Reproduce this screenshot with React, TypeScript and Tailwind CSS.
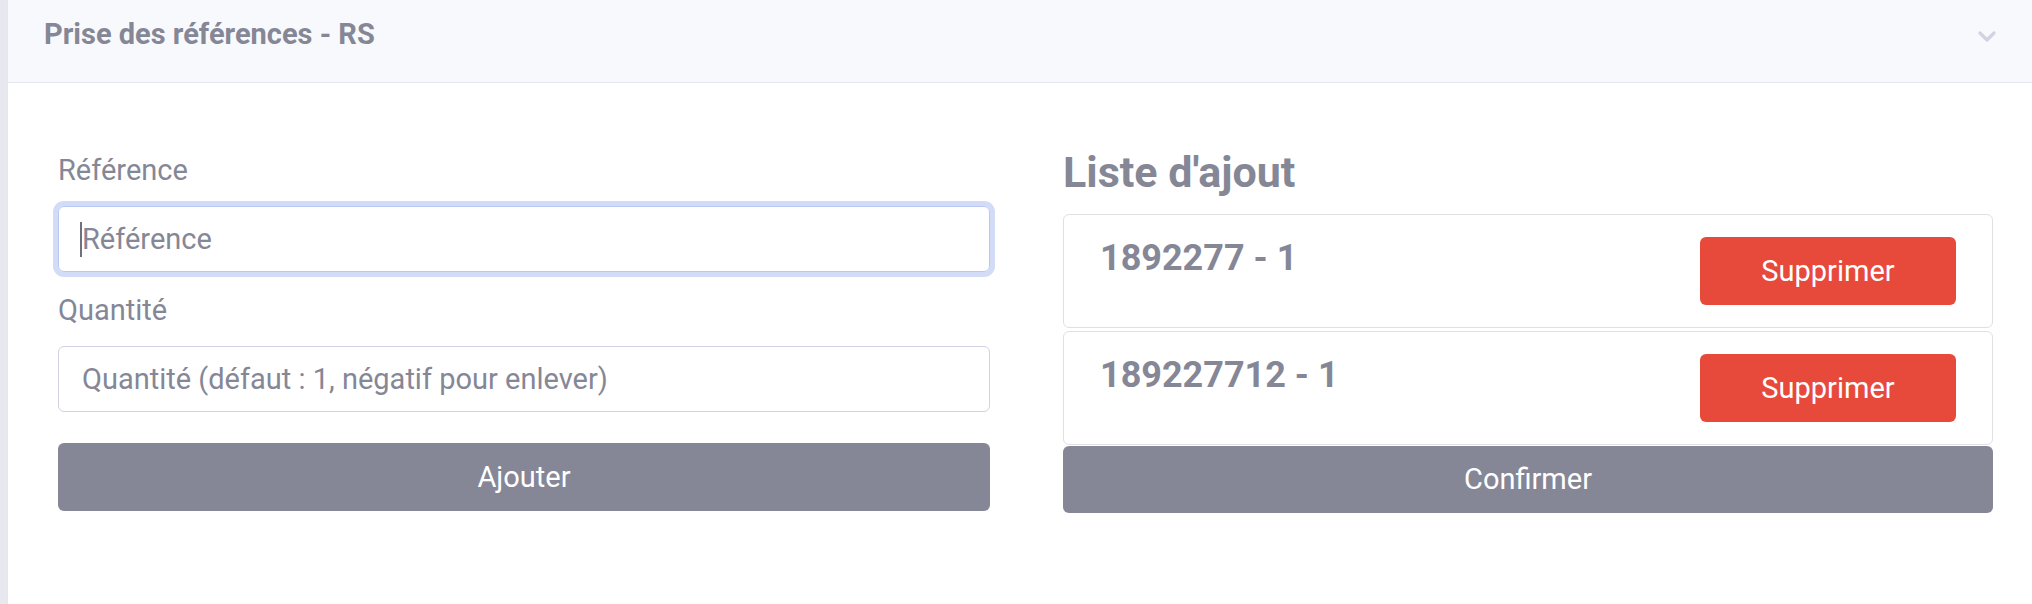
import { useState } from "react"

type Entry = {
  ref: string
  qty: number
}

const initialEntries: Entry[] = [
  { ref: "1892277", qty: 1 },
  { ref: "189227712", qty: 1 },
]

const ChevronDown = () => (
  <svg width="18" height="12" viewBox="0 0 18 12" fill="none" className="mt-[6px]">
    <polyline
      points="2,2 9,9 16,2"
      stroke="#d1d3e2"
      strokeWidth="3.2"
      strokeLinecap="round"
      strokeLinejoin="round"
    />
  </svg>
)

const EntryRow: React.FC<{ entry: Entry; onRemove: () => void }> = ({
  entry,
  onRemove,
}) => {
  return (
    <div className="h-[114px] flex items-start justify-between border border-[#e0e0e0] rounded-[6px] bg-white pt-[22px] pl-[36px] pr-[36px]">
      <div className="text-[36px] leading-[43px] font-bold text-[#858796]">
        {entry.ref} - {entry.qty}
      </div>
      <button
        onClick={onRemove}
        className="w-[256px] h-[68px] rounded-[6px] bg-[#e74a3b] text-white text-[29px] leading-none"
      >
        Supprimer
      </button>
    </div>
  )
}

export default function App() {
  const [entries, setEntries] = useState<Entry[]>(initialEntries)

  return (
    <div className="flex w-[2032px] h-[604px] overflow-hidden bg-white font-['Roboto',sans-serif] text-[#858796]">
      <div className="w-[7px] shrink-0 bg-[#e8e9f0]"></div>
      <div className="flex-1 flex flex-col border-l border-[#e3e6f0]">
        <div className="h-[83px] shrink-0 flex items-center justify-between bg-[#f8f9fc] border-b border-[#e3e6f0] pl-[36px] pr-[36px] pb-[14px]">
          <div className="text-[29px] leading-[35px] font-bold text-[#858796]">
            Prise des références - RS
          </div>
          <ChevronDown />
        </div>

        <div className="grid grid-cols-[932px_930px] gap-x-[73px] items-start pl-[50px] pt-[62px]">
          <div className="flex flex-col mt-[4px]">
            <label className="text-[29px] leading-[43px] mb-[14px]">
              Référence
            </label>
            <div className="relative">
              <input
                readOnly
                placeholder="Référence"
                className="w-full h-[66px] px-[23px] text-[29px] rounded-[6px] border border-[#bac8f3] ring-[5px] ring-[#4e73df]/25 outline-none placeholder:text-[#858796]"
              />
              <span className="absolute left-[22px] top-[16px] w-[2px] h-[35px] bg-[#6e7080]"></span>
            </div>
            <label className="text-[29px] leading-[43px] mt-[17px] mb-[14px]">
              Quantité
            </label>
            <input
              readOnly
              placeholder="Quantité (défaut : 1, négatif pour enlever)"
              className="w-full h-[66px] px-[23px] text-[29px] rounded-[6px] border border-[#d1d3e2] outline-none placeholder:text-[#858796]"
            />
            <button className="mt-[31px] h-[68px] w-full rounded-[6px] bg-[#858796] text-white text-[29px] leading-none">
              Ajouter
            </button>
          </div>

          <div className="flex flex-col mt-[1px]">
            <h3 className="text-[43px] leading-[52px] font-bold mb-[16px]">
              Liste d'ajout
            </h3>
            <div className="flex flex-col gap-[3px]">
              {entries.map((entry, i) => (
                <EntryRow
                  key={`${entry.ref}${i}`}
                  entry={entry}
                  onRemove={() =>
                    setEntries(entries.filter((_, j) => j !== i))
                  }
                />
              ))}
            </div>
            <button className="mt-[1px] h-[67px] w-full rounded-[6px] bg-[#858796] text-white text-[29px] leading-none">
              Confirmer
            </button>
          </div>
        </div>
      </div>
    </div>
  )
}
